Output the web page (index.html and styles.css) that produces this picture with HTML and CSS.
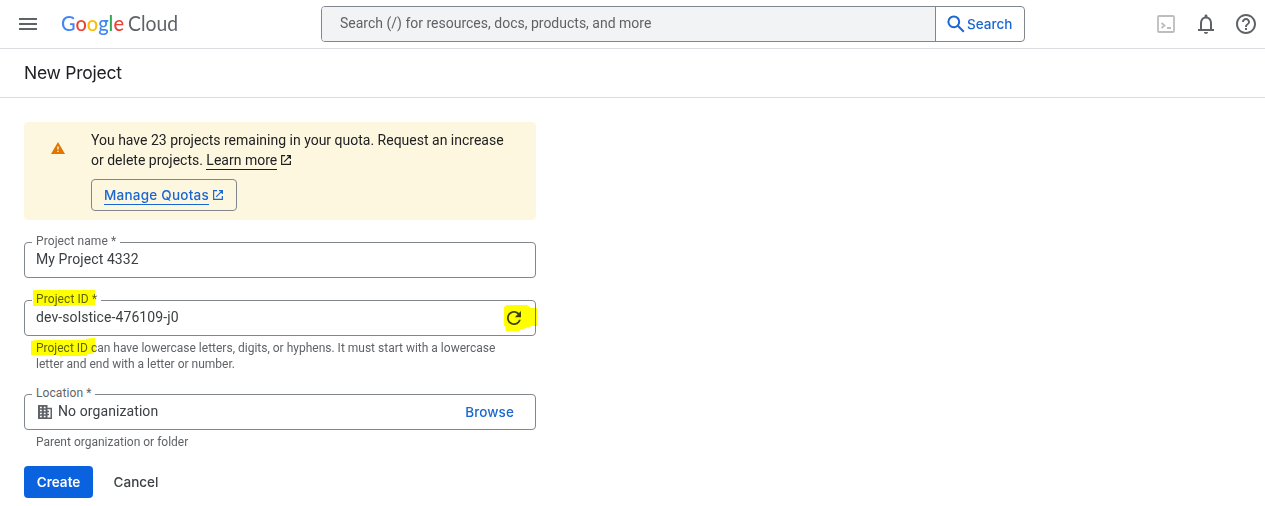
FILE: index.html
```html
<!DOCTYPE html>
<html lang="en">
<head>
<meta charset="utf-8">
<title>New Project</title>
<link rel="stylesheet" href="styles.css">
</head>
<body>
<header class="topbar">
  <svg class="menu" width="18" height="12" viewBox="0 0 18 12"><path d="M0 0h18v2H0zM0 5h18v2H0zM0 10h18v2H0z"/></svg>
  <svg class="logo" width="118" height="30" viewBox="0 0 118 30">
    <text class="logo-google" x="0" y="22" textLength="63" lengthAdjust="spacingAndGlyphs"><tspan fill="#4285f4">G</tspan><tspan fill="#ea4335">o</tspan><tspan fill="#fbbc04">o</tspan><tspan fill="#4285f4">g</tspan><tspan fill="#34a853">l</tspan><tspan fill="#ea4335">e</tspan></text>
    <text class="logo-cloud" x="67" y="22" textLength="50" lengthAdjust="spacingAndGlyphs">Cloud</text>
  </svg>
  <div class="search">
    <div class="search-input">Search (/) for resources, docs, products, and more</div>
    <div class="search-button">
      <svg width="18" height="18" viewBox="0 0 18 18"><circle cx="6.8" cy="6.8" r="5.4"/><path d="M10.8 10.8l6 6"/></svg>
      <span class="search-label">Search</span>
    </div>
  </div>
  <div class="tools">
    <svg width="18" height="18" viewBox="0 0 18 18" class="shell"><rect x="1" y="1" width="16" height="16" rx="1"/><path d="M4.500 8l3 2.500-3 2.500M10 13h4"/></svg>
    <svg width="24" height="24" viewBox="0 0 24 24" class="bell"><path d="M12 22c1.1 0 2-.9 2-2h-4c0 1.100.9 2 2 2zm6-5v-6c0-3.070-1.630-5.640-4.500-6.320V4c0-.830-.670-1.500-1.500-1.500S10.500 3.170 10.500 4v.680C7.640 5.360 6 7.920 6 11v6H4v2h16v-2h-2zm-2 0H8v-6c0-2.480 1.510-4.500 4-4.500s4 2.020 4 4.500v6z"/></svg>
    <svg width="24" height="24" viewBox="0 0 24 24" class="help"><path d="M11 18h2v-2h-2v2zm1-16C6.480 2 2 6.480 2 12s4.480 10 10 10 10-4.480 10-10S17.520 2 12 2zm0 18c-4.410 0-8-3.590-8-8s3.590-8 8-8 8 3.590 8 8-3.590 8-8 8zm0-14c-2.210 0-4 1.790-4 4h2c0-1.100.9-2 2-2s2 .9 2 2c0 2-3 1.750-3 5h2c0-2.250 3-2.500 3-5 0-2.210-1.790-4-4-4z"/></svg>
  </div>
</header>
<div class="titlebar"><h1>New Project</h1></div>
<main>
  <section class="notice">
    <svg class="warning" width="14" height="12" viewBox="0 0 14 12"><path fill="#e37400" d="M7 0l7 12H0z"/><path fill="#fef7e0" d="M6.300 4.500h1.400v3H6.300zM6.300 8.700h1.400v1.400H6.300z"/></svg>
    <div>
      <p>You have 23 projects remaining in your quota. Request an increase<br>or delete projects. <span class="learn">Learn more</span><svg class="ext" width="10" height="10" viewBox="0 0 11 11"><path d="M4.500.7H.7v9.600h9.600V6.500M6.500.7h3.800v3.800M10.300.7L3.500 7.500"/></svg></p>
      <div class="quota-button"><span class="quota-label">Manage Quotas</span><svg class="ext" width="10" height="10" viewBox="0 0 11 11"><path d="M4.500.7H.7v9.600h9.600V6.500M6.500.7h3.800v3.800M10.300.7L3.500 7.500"/></svg></div>
    </div>
  </section>

  <div class="field name-field">
    <span class="label">Project name *</span>
    <span class="value">My Project 4332</span>
  </div>

  <div class="field id-field">
    <span class="label">Project ID *</span>
    <span class="value">dev-solstice-476109-j0</span>
    <svg class="refresh" width="14" height="14" viewBox="4 4 16 16"><path d="M17.650 6.350C16.200 4.900 14.210 4 12 4c-4.420 0-7.990 3.580-7.990 8s3.570 8 7.990 8c3.730 0 6.840-2.550 7.730-6h-2.080c-.820 2.330-3.040 4-5.650 4-3.310 0-6-2.690-6-6s2.690-6 6-6c1.660 0 3.140.690 4.220 1.780L13 11h7V4l-2.350 2.350z"/></svg>
    <svg class="mark mark-label" width="62" height="16"><path d="M0 0h62v15H36v1H0z"/></svg>
    <svg class="mark mark-refresh" width="33" height="26"><path d="M0 2l3-2h20l4 3h6v18h-5l-9 3H17l-2 2H2l-1-5H0z"/></svg>
  </div>
  <div class="hint id-hint">Project ID can have lowercase letters, digits, or hyphens. It must start with a lowercase<br>letter and end with a letter or number.
    <svg class="mark mark-hint" width="64" height="19"><path d="M0 3l5-1h50V1l6-1h3v13l-4 3h-4v2H30v1l-2-2H0z"/></svg>
  </div>

  <div class="field location-field">
    <span class="label">Location *</span>
    <svg class="org" width="14" height="14" viewBox="0 0 14 14"><path fill-rule="evenodd" d="M0 0h9.500v2.800H14V14H0zM2 1.700v1.600h1.800V1.700zM5.800 1.700v1.600h1.800V1.700zM2 4.700v1.600h1.800V4.700zM5.800 4.700v1.600h1.800V4.700zM2 7.700v1.600h1.800V7.700zM5.800 7.700v1.600h1.800V7.700zM2 10.700v1.600h1.800v-1.600zM5.800 10.700v1.600h1.800v-1.600zM9.500 4.300v1.500H11v1.500H9.500v1.500H11v1.500H9.500v2.200h3V4.300z"/></svg>
    <span class="value">No organization</span>
    <span class="browse">Browse</span>
  </div>
  <div class="hint">Parent organization or folder</div>
  <div class="actions">
    <button class="create">Create</button>
    <button class="cancel">Cancel</button>
  </div>
</main>
</body>
</html>
```
FILE: styles.css
```css
* { box-sizing: border-box; }
body { margin: 0; height: 506px; overflow: hidden; background: #fff; color: #202124; font: 14px/20px Roboto, sans-serif; }
svg { display: block; flex: none; }
.topbar { height: 49px; border-bottom: 1px solid #dadce0; display: flex; align-items: center; padding: 0 7px 0 19px; }
.menu { fill: #5f6368; }
.logo { margin-left: 24px; font-family: Lato, sans-serif; font-size: 20.5px; overflow: visible; }
.logo-google { font-weight: 500; stroke: none; }
.logo-cloud { fill: #5f6368; }
.search { width: 704px; height: 36px; margin-left: 142px; border: 1px solid #80868b; border-radius: 4px; display: flex; overflow: hidden; }
.search-input { flex: 1; background: #f1f3f4; color: #5f6368; padding: 6px 18px; }
.search-button { width: 89px; border-left: 1px solid #80868b; display: flex; align-items: center; padding: 0 0 0 11px; gap: 2px; color: #1967d2; }
.search-button svg { fill: none; stroke: #1967d2; stroke-width: 2; }
.search-label, .browse, .quota-label, .create, .cancel { font-family: Inter, sans-serif; font-weight: 500; font-size: 13.5px; }
.tools { margin-left: auto; display: flex; align-items: center; gap: 19px; }
.shell { fill: none; stroke: #bdbdbd; stroke-width: 1.8; }
.bell, .help { fill: #5f6368; }
.help { margin-left: -3px; }
.titlebar { height: 49px; border-bottom: 1px solid #dadce0; padding: 12px 24px; }
h1 { margin: 0; font: 400 17.500px/24px Inter, sans-serif; letter-spacing: -.24px; }
main { width: 560px; padding: 24px; }
.notice { height: 98px; background: #fef7e0; border-radius: 4px; display: flex; padding: 8px 0 0 27px; gap: 26px; }
.warning { margin-top: 12px; }
.notice p { margin: 0 0 9px; }
.learn { border-bottom: 1px solid #202124; padding-bottom: 1px; }
.ext { display: inline-block; margin-left: 4px; fill: none; stroke: currentColor; stroke-width: 1.3; }
.quota-button { width: 146px; height: 32px; border: 1px solid #80868b; border-radius: 4px; display: flex; align-items: center; padding-left: 12px; color: #1967d2; }
.quota-label { border-bottom: 1px solid #1967d2; line-height: 18px; letter-spacing: .24px; }
.field { position: relative; height: 36px; border: 1px solid #80868b; border-radius: 4px; display: flex; padding: 6px 11px; color: #3c4043; }
.value { letter-spacing: .09px; }
.name-field, .id-field { margin-top: 22px; }
.label { position: absolute; left: 7px; top: -10px; padding: 0 4px; background: #fff; font-size: 12px; line-height: 16px; letter-spacing: .09px; color: #5f6368; }
.refresh { margin: 4px 3px 0 auto; fill: #3c4043; }
.mark { position: absolute; fill: #ff0; mix-blend-mode: multiply; }
.mark-label { left: 8px; top: -11px; }
.mark-refresh { left: 479px; top: 4px; }
.hint { padding-left: 12px; font-size: 12px; line-height: 16px; color: #5f6368; margin-top: 4px; }
.id-hint { position: relative; }
.mark-hint { left: 7px; top: -2px; }
.location-field { margin-top: 22px; }
.org { margin: 4px 6px 0 2px; fill: #5f6368; }
.browse { margin: 1px 10px 0 auto; color: #1967d2; letter-spacing: .1px; }
.actions { display: flex; gap: 8px; margin-top: 16px; }
button { height: 32px; border: 0; border-radius: 4px; padding: 0; background: none; color: #3c4043; }
.create { width: 69px; background: #0b62de; color: #fff; }
.actions .create { font-weight: 600; }
.cancel { width: 70px; }
```
